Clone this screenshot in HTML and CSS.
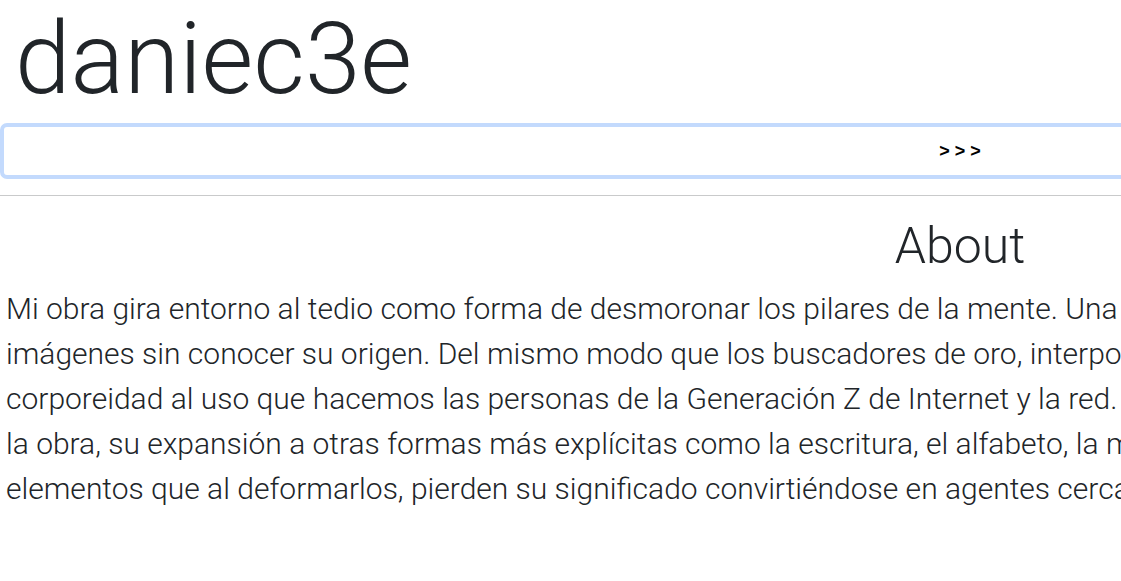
FILE: index.html
```html
<!DOCTYPE html>
<html lang="es">
<head>
<meta charset="utf-8">
<title>daniec3e</title>
<link rel="stylesheet" href="styles.css">
</head>
<body>
<div class="page">
  <h1 class="brand">daniec3e</h1>
  <div class="cmd">&gt; &gt; &gt;</div>
  <hr class="rule">
  <h2 class="section-title">About</h2>
  <p class="about">Mi obra gira entorno al tedio como forma de desmoronar los pilares de la mente. Una mente que se sumerge en un flujo de<br>imágenes sin conocer su origen. Del mismo modo que los buscadores de oro, interpolo fragmentos de la red para dar<br>corporeidad al uso que hacemos las personas de la Generación Z de Internet y la red. El dibujo es el eje central de<br>la obra, su expansión a otras formas más explícitas como la escritura, el alfabeto, la música o el vídeo, reúne<br>elementos que al deformarlos, pierden su significado convirtiéndose en agentes cercanos a la abstracción.</p>
</div>
</body>
</html>
```
FILE: styles.css
```css
html, body {
  margin: 0;
  padding: 0;
  background: #ffffff;
}

.page {
  width: 1920px;
  font-family: Roboto, "Liberation Sans", sans-serif;
  color: #212529;
}

.brand {
  margin: 0;
  padding: 0 0 0 15px;
  font-size: 100px;
  font-weight: 300;
  line-height: 117px;
}

.cmd {
  margin: 6px 0 0 0;
  height: 48px;
  border: 4px solid #c3dafd;
  border-radius: 7px;
  display: flex;
  align-items: center;
  justify-content: center;
  font-family: "Liberation Sans", Arial, sans-serif;
  font-weight: bold;
  font-size: 18px;
  color: #000;
}

.rule {
  margin: 16px 0 0 0;
  border: 0;
  border-top: 1px solid #c9cacb;
  height: 0;
}

.section-title {
  margin: 20px 0 0 0;
  text-align: center;
  font-size: 50px;
  font-weight: 300;
  line-height: 60px;
}

.about {
  margin: 10px 0 0 0;
  padding: 0 6px;
  font-size: 30px;
  font-weight: 300;
  line-height: 45px;
}
```
